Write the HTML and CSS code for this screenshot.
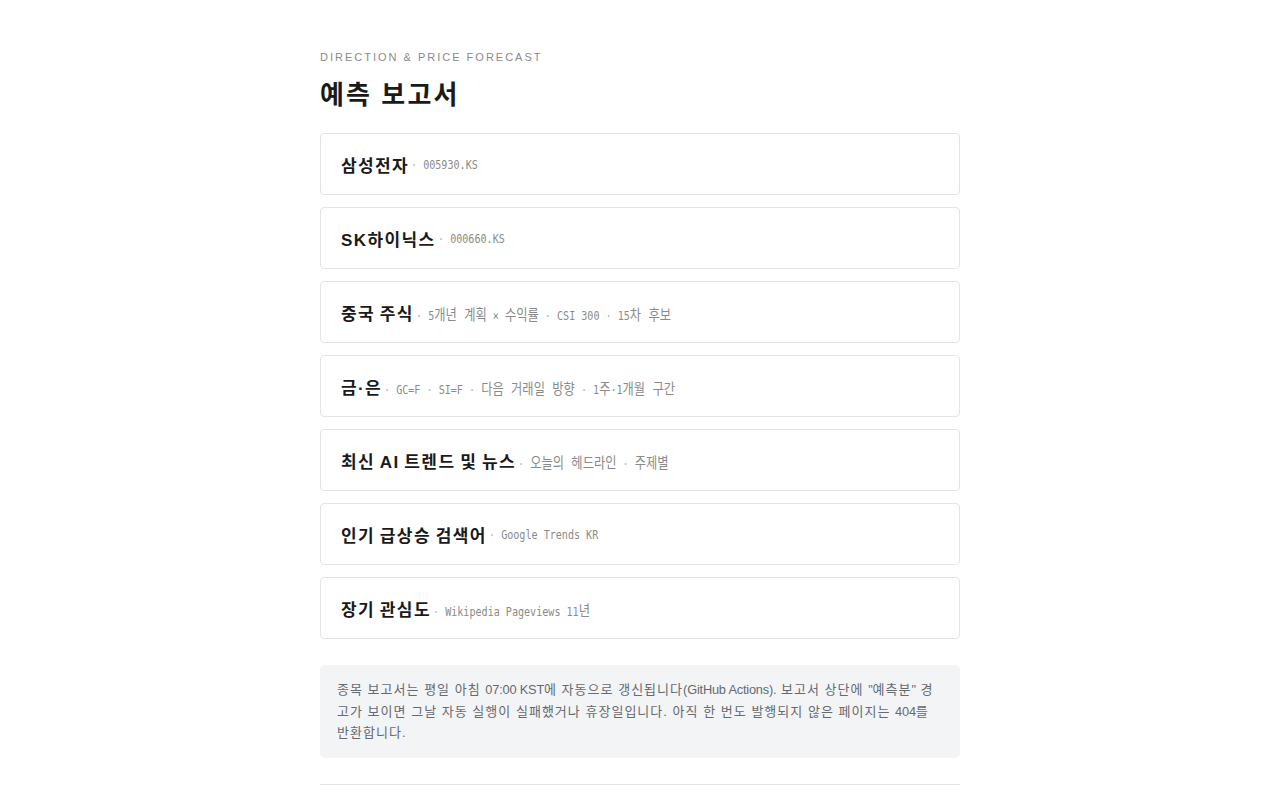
FILE: index.html
```html
<!DOCTYPE html>
<html lang="ko">
<head>
<meta charset="utf-8">
<title>예측 보고서</title>
<link rel="stylesheet" href="styles.css">
</head>
<body>
<main class="wrap">
  <p class="kicker">Direction &amp; Price Forecast</p>
  <h1 class="title">예측 보고서</h1>
  <ul class="list">
    <li class="card"><span class="name">삼성전자</span><span class="meta"><span class="dot">·</span> 005930.KS</span></li>
    <li class="card"><span class="name">SK하이닉스</span><span class="meta"><span class="dot">·</span> 000660.KS</span></li>
    <li class="card"><span class="name">중국 주식</span><span class="meta"><span class="dot">·</span> 5<span class="k">개년 계획</span> × <span class="k">수익률</span> <span class="dot">·</span> CSI 300 <span class="dot">·</span> 15<span class="k">차 후보</span></span></li>
    <li class="card"><span class="name">금·은</span><span class="meta"><span class="dot">·</span> GC=F <span class="dot">·</span> SI=F <span class="dot">·</span> <span class="k">다음 거래일 방향</span> <span class="dot">·</span> 1<span class="k">주</span>·1<span class="k">개월 구간</span></span></li>
    <li class="card"><span class="name">최신 AI 트렌드 및 뉴스</span><span class="meta"><span class="dot">·</span> <span class="k">오늘의 헤드라인</span> <span class="dot">·</span> <span class="k">주제별</span></span></li>
    <li class="card"><span class="name">인기 급상승 검색어</span><span class="meta"><span class="dot">·</span> Google Trends KR</span></li>
    <li class="card"><span class="name">장기 관심도</span><span class="meta"><span class="dot">·</span> Wikipedia Pageviews 11<span class="k">년</span></span></li>
  </ul>
  <p class="note">종목 보고서는 평일 아침 <span class="lat">07:00 KST</span>에 자동으로 갱신됩니다<span class="lat">(GitHub Actions).</span> 보고서 상단에 <span class="lat">"</span>예측분<span class="lat">"</span> 경고가 보이면 그날 자동 실행이 실패했거나 휴장일입니다. 아직 한 번도 발행되지 않은 페이지는 <span class="lat">404</span>를 반환합니다.</p>
  <hr class="rule">
</main>
</body>
</html>
```

FILE: styles.css
```css
html, body {
  margin: 0;
  padding: 0;
  background: #ffffff;
}
body {
  font-family: "Liberation Sans", Arial, "Noto Sans CJK KR", sans-serif;
  color: #1a1a1a;
}
.wrap {
  width: 640px;
  margin: 0 auto;
  padding-top: 51px;
}
.kicker {
  margin: 0;
  font-size: 11px;
  line-height: 13px;
  letter-spacing: 2px;
  text-transform: uppercase;
  color: #8a8a8a;
}
.title {
  margin: 15px 0 0;
  font-size: 26px;
  line-height: 32px;
  font-weight: 700;
  letter-spacing: 2.1px;
  color: #1a1a1a;
}
.list {
  list-style: none;
  margin: 22px 0 0;
  padding: 0;
  display: flex;
  flex-direction: column;
  gap: 12px;
}
.card {
  height: 60px;
  border: 1px solid #e3e3e3;
  border-radius: 4px;
  padding: 0 20px;
  display: flex;
  align-items: center;
  gap: 3px;
}
.name {
  font-size: 17px;
  font-weight: 700;
  letter-spacing: 1.4px;
  word-spacing: -1.4px;
  margin-right: -1px;
  color: #1a1a1a;
  white-space: nowrap;
}
.meta {
  font-family: "DejaVu Sans Mono", "Noto Sans CJK KR", monospace;
  font-size: 12px;
  color: #8a8a8a;
  transform: scaleX(0.84);
  transform-origin: left center;
  padding-top: 2px;
  white-space: pre;
}
.k {
  font-size: 14.6px;
}
.dot {
  color: #b4b4b4;
}
.note {
  margin: 26px 0 0;
  background: #f3f4f6;
  border-radius: 5px;
  padding: 14px 17px;
  font-size: 13px;
  line-height: 21.5px;
  letter-spacing: 1.02px;
  color: #666a70;
}
.lat {
  font-size: 12.8px;
  line-height: 1;
  letter-spacing: -0.2px;
}
.rule {
  margin: 26px 0 0;
  border: 0;
  border-top: 1px solid #e3e3e3;
}
```
